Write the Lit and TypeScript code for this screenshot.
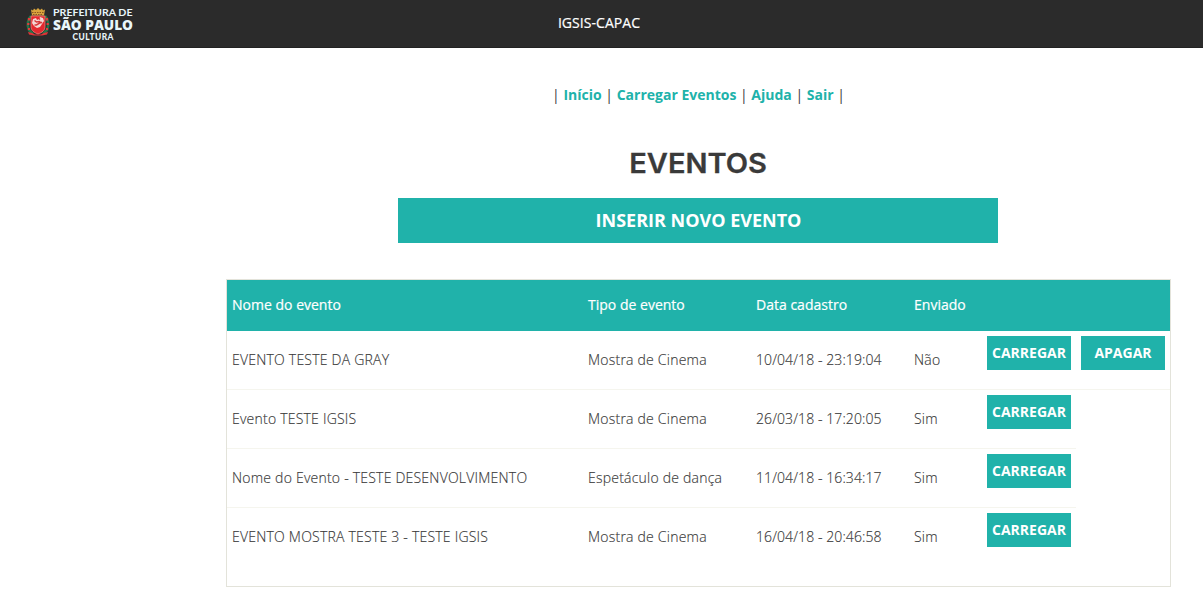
import { LitElement, html, css, nothing } from "lit";
import { customElement } from "lit/decorators.js";

interface Evento {
  nome: string;
  tipo: string;
  data: string;
  enviado: boolean;
}

const EVENTOS: Evento[] = [
  { nome: "EVENTO TESTE DA GRAY", tipo: "Mostra de Cinema", data: "10/04/18 - 23:19:04", enviado: false },
  { nome: "Evento TESTE IGSIS", tipo: "Mostra de Cinema", data: "26/03/18 - 17:20:05", enviado: true },
  { nome: "Nome do Evento - TESTE DESENVOLVIMENTO", tipo: "Espetáculo de dança", data: "11/04/18 - 16:34:17", enviado: true },
  { nome: "EVENTO MOSTRA TESTE 3 - TESTE IGSIS", tipo: "Mostra de Cinema", data: "16/04/18 - 20:46:58", enviado: true },
];

@customElement("city-logo")
class CityLogo extends LitElement {
  static styles = css`
    :host { display: block; width: 112px; height: 40px; }
    svg { display: block; }
    text { font-family: Lato, "Open Sans", sans-serif; fill: #e9f6fa; }
    .name { font-family: "Open Sans", sans-serif; }
  `;
  render() {
    return html`<svg width="112" height="40" viewBox="24 4 112 40" role="img" aria-label="Prefeitura de São Paulo Cultura">
      <path d="M31 9.500l2 1 1-2 2 1.500 2-2 2 2 2-1.500 1 2 2-1-1 6H32z" fill="#d9a43c"/>
      <path d="M32 12.500h12M33 14.500h10" stroke="#8a5524" stroke-width="1" stroke-dasharray="1.500 1"/>
      <path d="M31 16c-3 3-4.500 9-2 14l4 4M45 16c3 3 4.500 9 2 14l-4 4" fill="none" stroke="#28734a" stroke-width="2.600"/>
      <path d="M29 18v2.500M28.300 23v2M29 28v2M47 18v2.500M47.700 23v2M47 28v2" stroke="#e33b3b" stroke-width="2.200"/>
      <path d="M31 16h14v10.500c0 4-3 6-7 7.500-4-1.500-7-3.500-7-7.500z" fill="#e3292f" stroke="#ef8178" stroke-width=".8"/>
      <path d="M33 19l3-1 1 2 2-1 1-2 3 1 1 3-2 3-2 3-3 1-3-2-2-3z" fill="#f4d8d5"/>
      <path d="M34.500 20.500l2 1.500 3-.5 1 1-4 2.500-2 0M39 18.500l1 1M41 22l1 1" fill="none" stroke="#d73739" stroke-width="1.500"/>
      <path d="M28 32l4 1 3 1.500h6l3-1.500 4-1-1 2.500-5 1H34l-5-1z" fill="#e23236"/>
      <text x="53" y="16.300" font-size="9.900" font-weight="700" textLength="79.500" lengthAdjust="spacingAndGlyphs">PREFEITURA DE</text>
      <text class="name" x="53" y="29.500" font-size="13.600" font-weight="800" textLength="80" lengthAdjust="spacingAndGlyphs">SÃO PAULO</text>
      <text x="72.500" y="39.500" font-size="8.400" font-weight="900" textLength="41" lengthAdjust="spacing">CULTURA</text>
    </svg>`;
  }
}

@customElement("app-root")
class AppRoot extends LitElement {
  static styles = css`
    :host {
      display: block;
      height: 605px;
      overflow: hidden;
      background: #fff;
      color: #3a3a3a;
      font: 300 14px/24px "Open Sans", sans-serif;
    }
    * { box-sizing: border-box; }
    .bar {
      height: 48px;
      background: #2b2b2b;
      display: grid;
      grid-template-columns: 1fr auto 1fr;
      padding: 4px 24px 0 24px;
      border-bottom: 1px solid #222;
    }
    .brand { padding-top: 7px; color: #fff; font-weight: 400; font-size: 14px; letter-spacing: 0.05px; margin-left: -5px; -webkit-text-stroke: 0.2px #fff; }
    .content { margin-left: 226px; width: 945px; display: flex; flex-direction: column; align-items: center; }
    .menu { margin-top: 35px; height: 24px; color: #3a3a3a; font-weight: 400; white-space: pre; }
    .menu a { color: #20b2aa; font-weight: 700; text-decoration: none; }
    h1 { margin: 40px 0 0; font: 600 27px/34px Inter, sans-serif; height: 51px; color: #3a3a3a; transform: scaleX(1.075); -webkit-text-stroke: 0.3px #3a3a3a; }
    .btn { border: 0; background: #20b2aa; color: #fff; font: 700 14px/20px "Open Sans", sans-serif; padding: 0; white-space: nowrap; }
    .insert { width: 600px; height: 45px; font-size: 18px; padding: 0 0 2px 1px; margin-right: 1px; }
    .table { margin-top: 36px; width: 945px; height: 308px; border: 1px solid #e3e3da; }
    .row {
      display: grid;
      grid-template-columns: 356px 168px 158px 73px 94px 94px;
      height: 59px;
    }
    .head { height: 51px; background: #20b2aa; color: #fff; font-weight: 400; -webkit-text-stroke: 0.2px #fff; }
    .cell { padding: 17px 5px 0; white-space: nowrap; letter-spacing: 0.22px; -webkit-text-stroke: 0.15px currentColor; }
    .date { letter-spacing: 0.09px; }
    .head .cell { padding-top: 13px; letter-spacing: 0.01px; -webkit-text-stroke: 0.2px #fff; }
    .line { border-bottom: 1px solid #f5f5ee; }
    .action { padding: 5px; }
    .action .btn { display: block; width: 84px; height: 34px; }
  `;

  private line(last: boolean) {
    return last ? "" : "line";
  }

  render() {
    return html`
      <header class="bar">
        <city-logo></city-logo>
        <span class="brand">IGSIS-CAPAC</span>
      </header>
      <main class="content">
        <nav class="menu">| <a>Início</a> | <a>Carregar Eventos</a> | <a>Ajuda</a> | <a>Sair</a> |</nav>
        <h1>EVENTOS</h1>
        <button class="btn insert">INSERIR NOVO EVENTO</button>
        <section class="table">
          <div class="row head">
            ${["Nome do evento", "Tipo de evento", "Data cadastro", "Enviado"].map((t) => html`<div class="cell">${t}</div>`)}
          </div>
          ${EVENTOS.map((e, i) => {
            const l = this.line(i === EVENTOS.length - 1);
            return html`<div class="row">
              <div class="cell ${l}">${e.nome}</div>
              <div class="cell ${l}">${e.tipo}</div>
              <div class="cell date ${l}">${e.data}</div>
              <div class="cell ${l}">${e.enviado ? "Sim" : "Não"}</div>
              <div class="action ${l}"><button class="btn">CARREGAR</button></div>
              ${e.enviado ? nothing : html`<div class="action ${l}"><button class="btn">APAGAR</button></div>`}
            </div>`;
          })}
        </section>
      </main>
    `;
  }
}
